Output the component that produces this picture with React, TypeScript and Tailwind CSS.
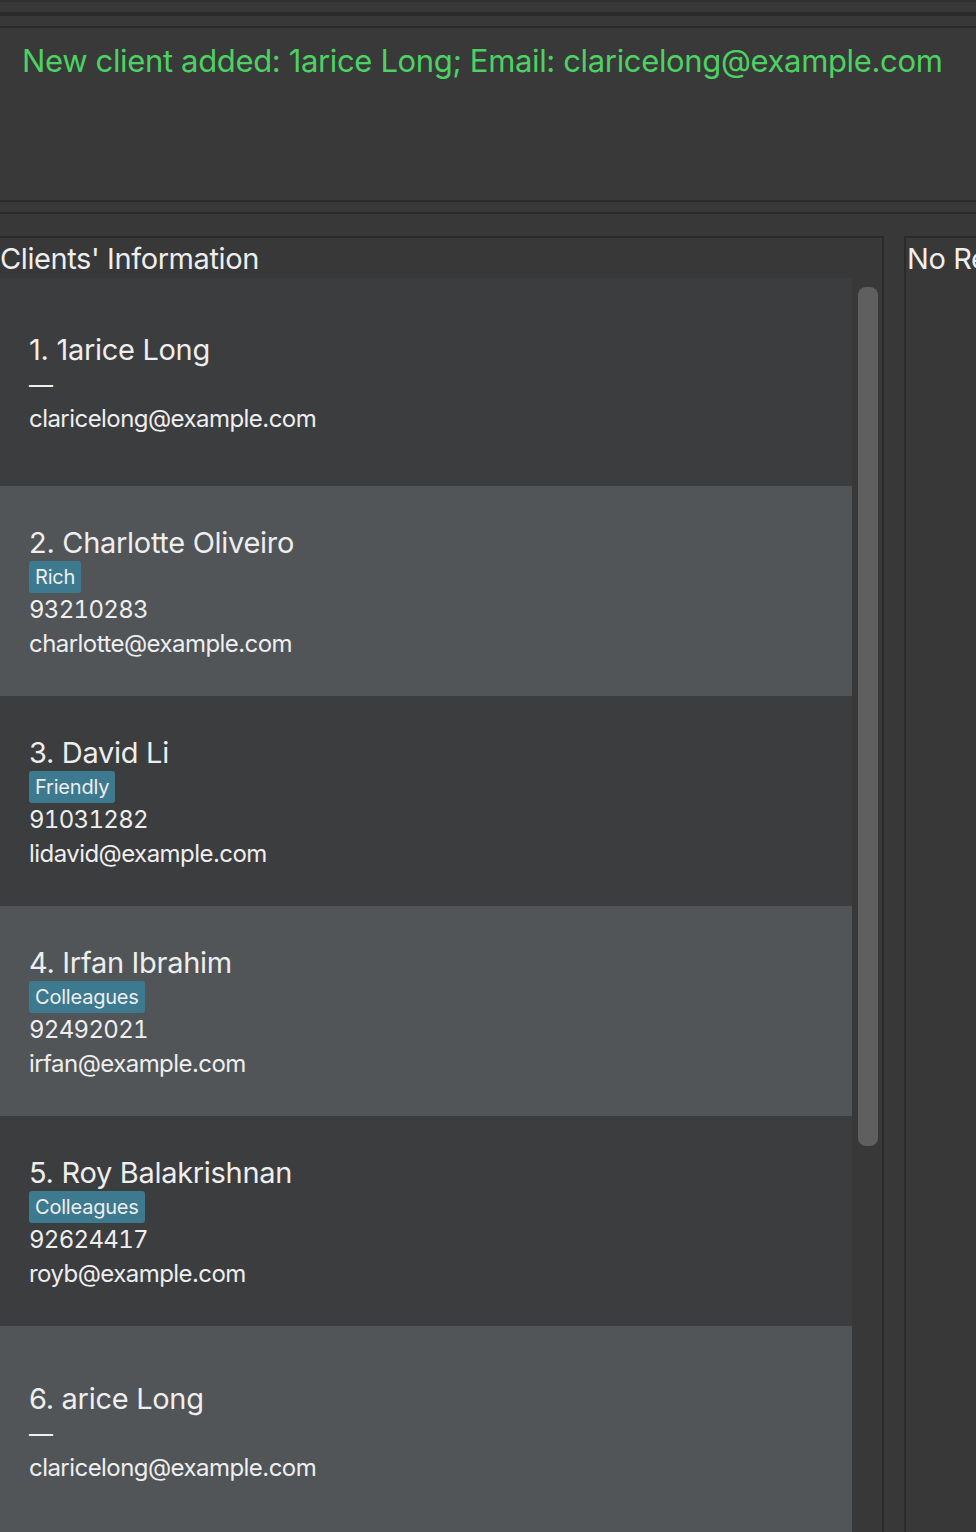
type Client = {
  name: string;
  tag?: string;
  phone: string;
  email: string;
};

const clients: Client[] = [
  { name: "1. 1arice Long", phone: "—", email: "claricelong@example.com" },
  { name: "2. Charlotte Oliveiro", tag: "Rich", phone: "93210283", email: "charlotte@example.com" },
  { name: "3. David Li", tag: "Friendly", phone: "91031282", email: "lidavid@example.com" },
  { name: "4. Irfan Ibrahim", tag: "Colleagues", phone: "92492021", email: "irfan@example.com" },
  { name: "5. Roy Balakrishnan", tag: "Colleagues", phone: "92624417", email: "royb@example.com" },
  { name: "6. arice Long", phone: "—", email: "claricelong@example.com" },
];

function ClientCard({ client, index }: { client: Client; index: number }) {
  return (
    <div
      className={`flex shrink-0 flex-col justify-center pl-[29px] pt-[4px] text-[#eeeeee] ${
        index === 0 ? "h-[208px]" : "h-[210px]"
      } ${index % 2 === 0 ? "bg-[#3c3d3f]" : "bg-[#515558]"}`}
    >
      <div className="text-[29px] leading-[36px] tracking-[-0.3px]">{client.name}</div>
      {client.tag && (
        <div className="flex h-[32px]">
          <span className="rounded-[3px] bg-[#3d7a90] px-[6px] text-[20px] leading-[32px] tracking-[-0.2px]">
            {client.tag}
          </span>
        </div>
      )}
      <div className="text-[24px] leading-[34px] tabular-nums tracking-[-0.7px]">{client.phone}</div>
      <div className="text-[24px] leading-[34px] tracking-[-0.55px]">{client.email}</div>
    </div>
  );
}

export default function App() {
  return (
    <div className="flex h-[1532px] w-[976px] flex-col overflow-hidden bg-[#383838] font-['Inter',sans-serif]">
      {/* menu / command area */}
      <div className="h-[2px] bg-[#303030]" />
      <div className="h-[10px]" />
      <div className="h-[4px] bg-[#2b2b2b]" />
      <div className="h-[10px]" />
      <div className="h-[2px] bg-[#2b2b2b]" />

      {/* result display */}
      <div className="h-[172px] bg-[#393939] pl-[22px] pt-[14px]">
        <p className="whitespace-nowrap text-[31px] leading-[38px] tracking-[-0.35px] text-[#4cd263]">
          New client added: 1arice Long; Email: claricelong@example.com
        </p>
      </div>
      <div className="h-[2px] bg-[#2b2b2b]" />
      <div className="h-[10px]" />
      <div className="h-[2px] bg-[#2b2b2b]" />
      <div className="h-[22px]" />

      {/* panels */}
      <div className="flex min-h-0 flex-1 gap-[20px]">
        <div className="flex w-[884px] shrink-0 flex-col border-t-2 border-r-2 border-[#2b2b2b]">
          <div className="h-[40px] text-[29px] leading-[42px] tracking-[-0.4px] text-[#eeeeee]">
            Clients' Information
          </div>
          <div className="flex min-h-0 flex-1">
            <div className="flex w-[852px] shrink-0 flex-col">
              {clients.map((c, i) => (
                <ClientCard key={i} client={c} index={i} />
              ))}
            </div>
            <div className="flex-1 px-[6px] pt-[9px]">
              <div className="h-[859px] w-[20px] rounded-[8px] bg-[#5f5f5f]" />
            </div>
          </div>
        </div>
        <div className="min-w-0 flex-1 overflow-hidden border-t-2 border-l-2 border-[#2b2b2b] pl-[1px]">
          <div className="whitespace-nowrap text-[29px] leading-[42px] tracking-[-0.4px] text-[#eeeeee]">
            No Re
          </div>
        </div>
      </div>
    </div>
  );
}
